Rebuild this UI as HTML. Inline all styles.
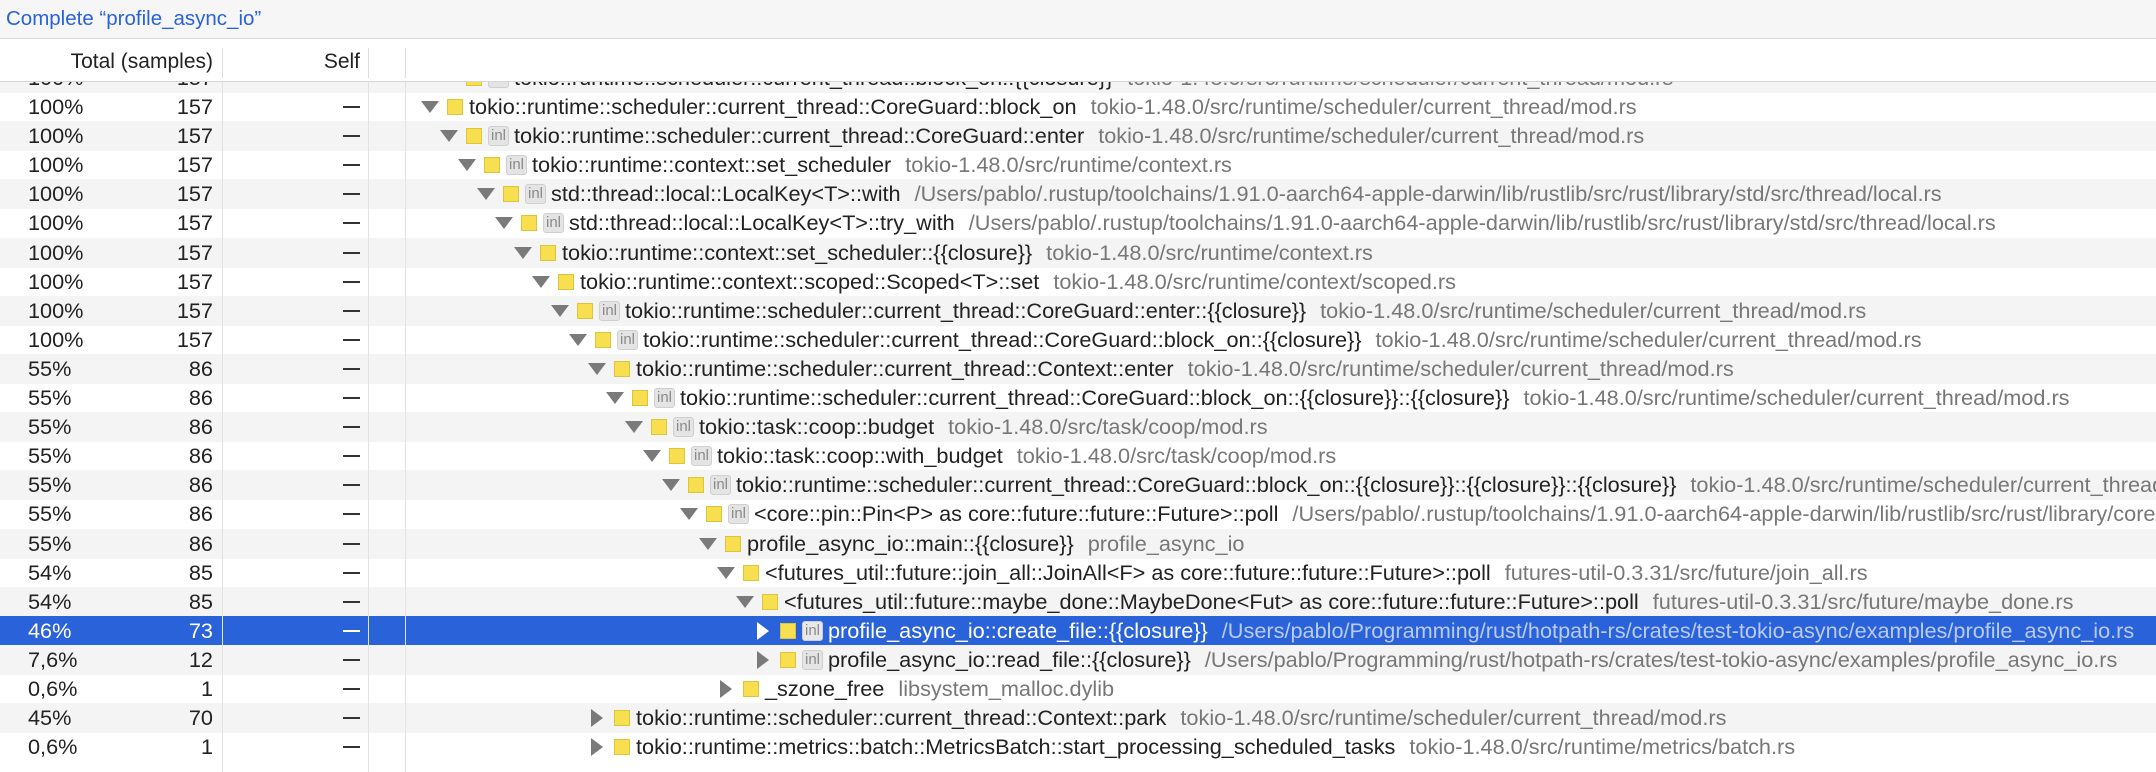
<!DOCTYPE html>
<html><head><meta charset="utf-8"><style>
*{margin:0;padding:0;box-sizing:border-box}
body{width:2156px;height:772px;overflow:hidden;background:#fff;font-family:"Liberation Sans",Helvetica,Arial,sans-serif;font-size:21.7px;color:#222;position:relative}
#title{position:absolute;left:0;top:0;width:2156px;height:39px;background:#f6f6f6;border-bottom:1px solid #d8d8d8;color:#2a62d9;padding-left:6px;line-height:38px;font-size:20.5px}
#hdr{position:absolute;left:0;top:40px;width:2156px;height:42px;background:#fff;border-bottom:1px solid #d6d6d6;z-index:3}
.hd{position:absolute;top:8px;height:30px;border-right:1px solid #dcdcdc}
.ht{position:absolute;top:10px;line-height:24px;font-size:21px}
.vl{position:absolute;top:82px;bottom:0;width:1px;background:#e2e2e2;z-index:2}
#rows{position:absolute;left:0;top:0;width:2156px;height:772px;overflow:hidden}
.row{position:absolute;left:0;width:2156px;height:30px;line-height:29px;white-space:nowrap;overflow:hidden}
.g{background:#f4f4f4}
.sel{background:#2a62d9;color:#fff}
.pc{position:absolute;left:28px}
.ct{position:absolute;right:1943px;text-align:right}
.sf{position:absolute;left:343px;width:17px;top:14px;height:2px;background:#333}
.sel .sf{background:#fff}
.fn{position:absolute;display:flex;align-items:center;height:29px}
.tri{width:18px;height:18px;margin-right:8px;display:flex;align-items:center;justify-content:center}
.sq{width:16px;height:16px;background:#f7df4f;border:1px solid #dcc53c;margin-right:6px;flex:none}
.inl{width:21px;height:20px;background:#e4e4e4;border:1px solid #cfcfcf;border-radius:3px;font-size:15px;line-height:18px;color:#8a8a8a;text-align:center;margin-right:5px;flex:none}
.p{color:#777;margin-left:14px}
.sel .p{color:#b9cbf3}
.sel .inl{background:#e8e8e8}
</style></head><body>
<div id="title">Complete “profile_async_io”</div>
<div id="rows"></div>
<div id="hdr">
<div class="hd" style="left:222px;width:1px"></div>
<div class="hd" style="left:368px;width:1px"></div>
<div class="hd" style="left:405px;width:1px"></div>
<div class="ht" style="right:1943px">Total (samples)</div>
<div class="ht" style="right:1796px">Self</div>
</div>
<div class="vl" style="left:222px"></div>
<div class="vl" style="left:368px"></div>
<div class="vl" style="left:405px"></div>
<script>
var D="▼",R="▶";
var rows=[
[-1,"100%","157",1,1,0,"tokio::runtime::scheduler::current_thread::block_on::{{closure}}","tokio-1.48.0/src/runtime/scheduler/current_thread/mod.rs",0],
[0,"100%","157",0,0,D,"tokio::runtime::scheduler::current_thread::CoreGuard::block_on","tokio-1.48.0/src/runtime/scheduler/current_thread/mod.rs"],
[1,"100%","157",1,1,D,"tokio::runtime::scheduler::current_thread::CoreGuard::enter","tokio-1.48.0/src/runtime/scheduler/current_thread/mod.rs"],
[2,"100%","157",0,1,D,"tokio::runtime::context::set_scheduler","tokio-1.48.0/src/runtime/context.rs"],
[3,"100%","157",1,1,D,"std::thread::local::LocalKey<T>::with","/Users/pablo/.rustup/toolchains/1.91.0-aarch64-apple-darwin/lib/rustlib/src/rust/library/std/src/thread/local.rs"],
[4,"100%","157",0,1,D,"std::thread::local::LocalKey<T>::try_with","/Users/pablo/.rustup/toolchains/1.91.0-aarch64-apple-darwin/lib/rustlib/src/rust/library/std/src/thread/local.rs"],
[5,"100%","157",1,0,D,"tokio::runtime::context::set_scheduler::{{closure}}","tokio-1.48.0/src/runtime/context.rs"],
[6,"100%","157",0,0,D,"tokio::runtime::context::scoped::Scoped<T>::set","tokio-1.48.0/src/runtime/context/scoped.rs"],
[7,"100%","157",1,1,D,"tokio::runtime::scheduler::current_thread::CoreGuard::enter::{{closure}}","tokio-1.48.0/src/runtime/scheduler/current_thread/mod.rs"],
[8,"100%","157",0,1,D,"tokio::runtime::scheduler::current_thread::CoreGuard::block_on::{{closure}}","tokio-1.48.0/src/runtime/scheduler/current_thread/mod.rs"],
[9,"55%","86",1,0,D,"tokio::runtime::scheduler::current_thread::Context::enter","tokio-1.48.0/src/runtime/scheduler/current_thread/mod.rs"],
[10,"55%","86",0,1,D,"tokio::runtime::scheduler::current_thread::CoreGuard::block_on::{{closure}}::{{closure}}","tokio-1.48.0/src/runtime/scheduler/current_thread/mod.rs"],
[11,"55%","86",1,1,D,"tokio::task::coop::budget","tokio-1.48.0/src/task/coop/mod.rs"],
[12,"55%","86",0,1,D,"tokio::task::coop::with_budget","tokio-1.48.0/src/task/coop/mod.rs"],
[13,"55%","86",1,1,D,"tokio::runtime::scheduler::current_thread::CoreGuard::block_on::{{closure}}::{{closure}}::{{closure}}","tokio-1.48.0/src/runtime/scheduler/current_thread/mod.rs"],
[14,"55%","86",0,1,D,"<core::pin::Pin<P> as core::future::future::Future>::poll","/Users/pablo/.rustup/toolchains/1.91.0-aarch64-apple-darwin/lib/rustlib/src/rust/library/core/src/future/future.rs"],
[15,"55%","86",1,0,D,"profile_async_io::main::{{closure}}","profile_async_io"],
[16,"54%","85",0,0,D,"<futures_util::future::join_all::JoinAll<F> as core::future::future::Future>::poll","futures-util-0.3.31/src/future/join_all.rs"],
[17,"54%","85",1,0,D,"<futures_util::future::maybe_done::MaybeDone<Fut> as core::future::future::Future>::poll","futures-util-0.3.31/src/future/maybe_done.rs"],
[18,"46%","73",2,1,R,"profile_async_io::create_file::{{closure}}","/Users/pablo/Programming/rust/hotpath-rs/crates/test-tokio-async/examples/profile_async_io.rs"],
[18,"7,6%","12",1,1,R,"profile_async_io::read_file::{{closure}}","/Users/pablo/Programming/rust/hotpath-rs/crates/test-tokio-async/examples/profile_async_io.rs"],
[16,"0,6%","1",0,0,R,"_szone_free","libsystem_malloc.dylib"],
[9,"45%","70",1,0,R,"tokio::runtime::scheduler::current_thread::Context::park","tokio-1.48.0/src/runtime/scheduler/current_thread/mod.rs"],
[9,"0,6%","1",0,0,R,"tokio::runtime::metrics::batch::MetricsBatch::start_processing_scheduled_tasks","tokio-1.48.0/src/runtime/metrics/batch.rs"]
];
function esc(s){return s.replace(/&/g,"&amp;").replace(/</g,"&lt;").replace(/>/g,"&gt;")}
var h="";
rows.forEach(function(r,i){
 var top=Math.round(92+(i-1)*29.1);
 var cls=r[3]==2?"row sel":(r[3]==1?"row g":"row");
 var lvl=r[0]<0?1:r[0];
 var x=Math.round(421+lvl*18.5);
 var tc=r[3]==2?"#fff":"#7a7a7a";
 var tri="";
 if(r[5]==D) tri='<svg width="18" height="12"><path d="M0 0H18L9 12Z" fill="'+tc+'"/></svg>';
 else if(r[5]==R) tri='<svg width="12" height="18"><path d="M0 0V18L12 9Z" fill="'+tc+'"/></svg>';
 h+='<div class="'+cls+'" style="top:'+top+'px"><span class="pc">'+r[1]+'</span><span class="ct">'+r[2]+'</span><span class="sf"></span>'+
 '<div class="fn" style="left:'+x+'px"><span class="tri">'+tri+'</span><span class="sq"></span>'+(r[4]?'<span class="inl">inl</span>':'')+
 '<span>'+esc(r[6])+'</span><span class="p">'+esc(r[7])+'</span></div></div>';
});
document.getElementById("rows").innerHTML=h;
</script>
</body></html>
